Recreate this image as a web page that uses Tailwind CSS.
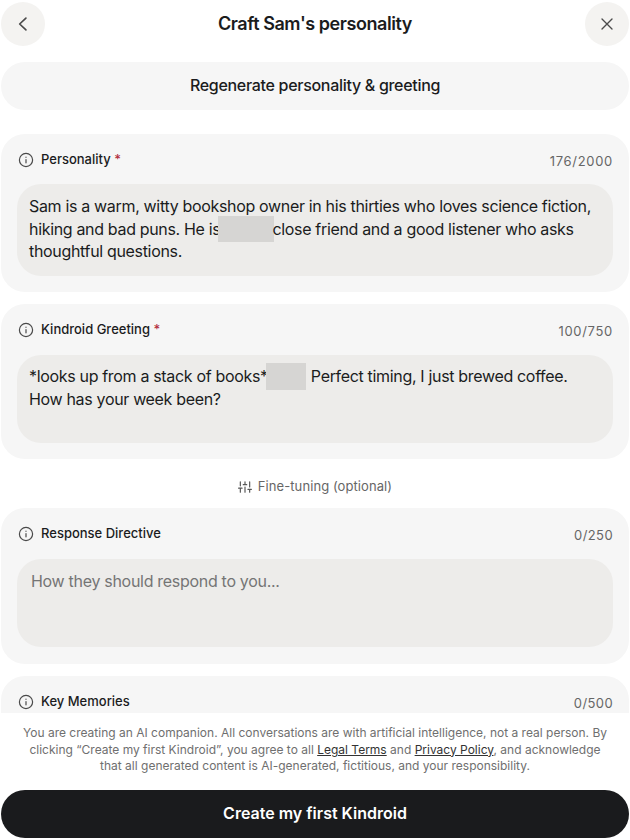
<!DOCTYPE html>
<html lang="en">
<head>
<meta charset="utf-8">
<script src="https://cdn.jsdelivr.net/npm/@tailwindcss/browser@4"></script>
<title>Craft Sam's personality</title>
</head>
<body class="bg-white font-['Inter','Liberation_Sans',sans-serif] text-[#1b1c1d]">
<div class="w-[630px] h-[840px] flex flex-col overflow-hidden">
  <div class="h-[713px] overflow-hidden px-px pt-[2px]">
    <div class="flex items-center justify-between h-[44px]">
      <button class="w-[44px] h-[44px] rounded-full bg-[#f4f3f1] flex items-center justify-center">
        <svg width="20" height="20" viewBox="0 0 24 24" fill="none" stroke="#4a4a4a" stroke-width="2" stroke-linecap="round" stroke-linejoin="round"><path d="M15.5 5l-7.5 7 7.5 7"/></svg>
      </button>
      <div class="text-[18px] font-semibold leading-[24px] tracking-[-0.43px]">Craft Sam's personality</div>
      <button class="w-[44px] h-[44px] rounded-full bg-[#f4f3f1] flex items-center justify-center">
        <svg width="20" height="20" viewBox="0 0 24 24" fill="none" stroke="#4a4a4a" stroke-width="1.6" stroke-linecap="round"><path d="M6 6l12 12M18 6L6 18"/></svg>
      </button>
    </div>
    <button class="mt-[16px] w-[628px] h-[48px] rounded-[24px] bg-[#f6f6f6] text-[16px] font-medium tracking-[-0.3px] flex items-center justify-center pb-[2px]">Regenerate personality &amp; greeting</button>

    <section class="mt-[24px] h-[158px] rounded-[24px] bg-[#f6f6f6] px-[16px] pt-[16px]">
      <div class="flex items-center justify-between h-[20px] pl-[1px]">
        <div class="flex items-center gap-[7px] text-[13px] font-[450]">
          <svg width="16" height="16" viewBox="0 0 16 16" fill="none" stroke="#4a4a4a" stroke-width="1.2" stroke-linecap="round"><circle cx="8" cy="8" r="6.6"/><path d="M8 7.6v3.2M8 5.2v.1"/></svg>
          <span>Personality <span class="text-[#b3303f]">*</span></span>
        </div>
        <div class="text-[13px] text-[#666] tracking-[0.7px] pt-[4px]">176/2000</div>
      </div>
      <div class="mt-[14px] h-[92px] rounded-[24px] bg-[#edecea] px-[12px] py-[11px] text-[16px] leading-[22.5px] tracking-[-0.33px]">Sam is a warm, witty bookshop owner in his thirties who loves science fiction, hiking and bad puns. He is<span class="inline-block w-[56px] h-[26px] -my-[5px] -ml-[2px] -mr-[2px] bg-[#d6d5d3] align-[-2px]"></span>close friend and a good listener who asks thoughtful questions.</div>
    </section>

    <section class="mt-[12px] h-[155px] rounded-[24px] bg-[#f6f6f6] px-[16px] pt-[16px]">
      <div class="flex items-center justify-between h-[20px] pl-[1px]">
        <div class="flex items-center gap-[7px] text-[13px] font-[450]">
          <svg width="16" height="16" viewBox="0 0 16 16" fill="none" stroke="#4a4a4a" stroke-width="1.2" stroke-linecap="round"><circle cx="8" cy="8" r="6.6"/><path d="M8 7.6v3.2M8 5.2v.1"/></svg>
          <span>Kindroid Greeting <span class="text-[#b3303f]">*</span></span>
        </div>
        <div class="text-[13px] text-[#666] tracking-[0.7px] pt-[4px]">100/750</div>
      </div>
      <div class="mt-[15px] h-[88px] rounded-[24px] bg-[#edecea] px-[12px] py-[10px] text-[16px] leading-[22.5px] tracking-[-0.33px]">*looks up from a stack of books*<span class="inline-block w-[40px] h-[27px] -my-[6px] -ml-[2px] mr-[1px] bg-[#d6d5d3] align-[-2px]"></span> Perfect timing, I just brewed coffee. How has your week been?</div>
    </section>

    <div class="h-[49px] flex items-center justify-center gap-[6px] pt-[6px] text-[13px] text-[#666] tracking-[0.08px]">
      <svg width="14" height="14" viewBox="0 0 24 24" fill="none" stroke="#555" stroke-width="2" stroke-linecap="round"><path d="M4 21v-7M4 10V3M12 21v-9M12 8V3M20 21v-5M20 12V3M1 14h6M9 8h6M17 16h6"/></svg>
      <span>Fine-tuning (optional)</span>
    </div>

    <section class="h-[156px] rounded-[24px] bg-[#f6f6f6] px-[16px] pt-[16px]">
      <div class="flex items-center justify-between h-[20px] pl-[1px]">
        <div class="flex items-center gap-[7px] text-[13px] font-[450]">
          <svg width="16" height="16" viewBox="0 0 16 16" fill="none" stroke="#4a4a4a" stroke-width="1.2" stroke-linecap="round"><circle cx="8" cy="8" r="6.6"/><path d="M8 7.6v3.2M8 5.2v.1"/></svg>
          <span>Response Directive</span>
        </div>
        <div class="text-[13px] text-[#666] tracking-[0.4px] pt-[4px]">0/250</div>
      </div>
      <div class="mt-[15px] h-[88px] rounded-[24px] bg-[#edecea] px-[14px] py-[11px] text-[16px] leading-[22.5px] tracking-[-0.3px] text-[#757575]">How they should respond to you...</div>
    </section>

    <section class="mt-[12px] h-[100px] rounded-[24px] bg-[#f6f6f6] px-[16px] pt-[16px]">
      <div class="flex items-center justify-between h-[20px] pl-[1px]">
        <div class="flex items-center gap-[7px] text-[13px] font-[450]">
          <svg width="16" height="16" viewBox="0 0 16 16" fill="none" stroke="#4a4a4a" stroke-width="1.2" stroke-linecap="round"><circle cx="8" cy="8" r="6.6"/><path d="M8 7.6v3.2M8 5.2v.1"/></svg>
          <span>Key Memories</span>
        </div>
        <div class="text-[13px] text-[#666] tracking-[0.4px] pt-[4px]">0/500</div>
      </div>
    </section>
  </div>

  <div class="flex-1 px-px flex flex-col">
    <p class="mt-[12px] px-[16px] text-center text-[12px] leading-[16.5px] text-[#6f6f6f]">You are creating an AI companion. All conversations are with artificial intelligence, not a real person. By clicking “Create my first Kindroid”, you agree to all <a class="underline text-[#333]">Legal Terms</a> and <a class="underline text-[#333]">Privacy Policy</a>, and acknowledge that all generated content is AI-generated, fictitious, and your responsibility.</p>
    <button class="mt-[15px] h-[48px] w-[628px] rounded-[24px] bg-[#1a1b1d] text-white text-[16px] font-semibold flex items-center justify-center pb-[1px]">Create my first Kindroid</button>
  </div>
</div>
</body>
</html>
